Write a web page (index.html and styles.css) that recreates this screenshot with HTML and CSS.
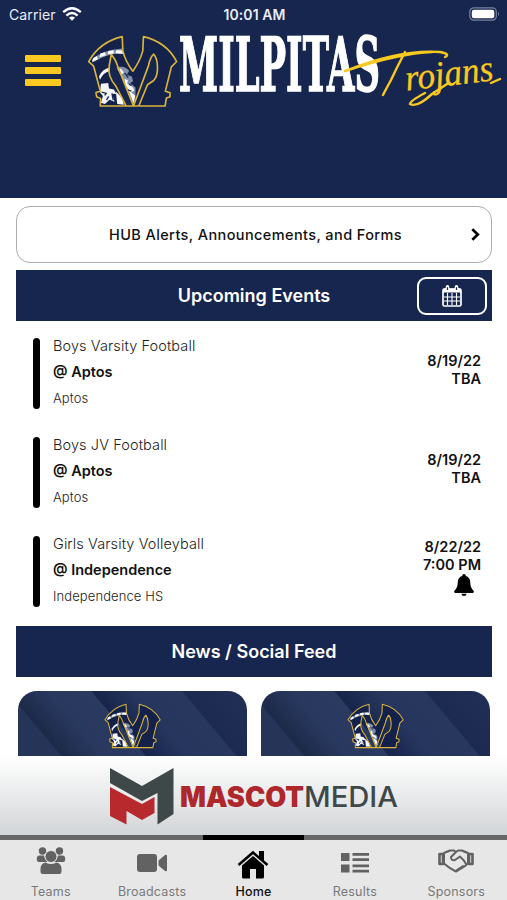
FILE: index.html
```html
<!DOCTYPE html>
<html lang="en">
<head>
<meta charset="utf-8">
<title>Milpitas Trojans</title>
<link rel="stylesheet" href="styles.css">
</head>
<body>
<svg class="defs" width="0" height="0" aria-hidden="true">
  <symbol id="crest" viewBox="262 104 274 218">
    <path id="m" d="M368 108Q300 124 267 183L282 197 302 272 289 276 291 289 303 294 302 317H380L349 257Q323 228 329 195L335 162Q347 174 354 196L402 309 447 196Q452 171 463 161Q473 173 474 195Q476 227 463 240L444 253 418 317H497L501 293 512 289 512 277 498 272 516 199 532 183Q501 124 432 108L430 151Q422 181 400 212Q377 182 370 151Z" fill="#14224b"/>
    <path d="M278 176Q307 149 369 144L374 158Q321 158 279 186Z" fill="#8994ad"/>
    <path d="M277 184L281 172 291 166 295 176ZM300 170L302 159 316 155 319 164ZM325 161L326 151 342 149 342 159ZM348 158L350 149 367 150 371 160Z" fill="#fff"/>
    <path d="M298 228Q309 204 332 201L329 212Q311 215 301 238ZM304 250L326 248 328 264 343 267 351 281 337 280 345 304 330 298 316 311 304 307 310 287 301 276Z" fill="#f2f4f8"/>
    <path d="M351 201Q374 193 389 211L382 223 397 228 401 242 392 248 408 261 408 301 402 312 363 224Z" fill="#8290ac"/>
    <path d="M375 235L385 239 383 249 399 260 405 270 395 276 407 286 402 308 386 265 378 255ZM354 206L364 205 373 216 366 222ZM349 274L367 291 373 313 353 311Z" fill="#fff"/>
    <path d="M306 275L320 279 315 285M337 279L341 299M375 217L386 231M388 251L396 255M385 268L396 272M321 299L327 288" fill="none" stroke="#1b2c55" stroke-width="4"/>
    <path d="M368 108Q300 124 267 183L282 197 302 272 289 276 291 289 303 294 302 317H380L349 257Q323 228 329 195L335 162Q347 174 354 196L402 317 447 196Q452 171 463 161Q473 173 474 195Q476 227 463 240L444 253 418 317H497L501 293 512 289 512 277 498 272 516 199 532 183Q501 124 432 108L430 151Q422 181 400 212Q377 182 370 151ZM380 317H418" fill="none" stroke="#d9b33c" stroke-width="5" stroke-linejoin="round"/>
  </symbol>
</svg>

<header class="header">
  <div class="status">
    <span class="carrier">Carrier
      <svg width="20" height="14" viewBox="0 0 20 14" fill="none" stroke="#fff" stroke-width="2.4"><path d="M1.2 5.2Q10-2.6 18.8 5.2M4.4 8.6Q10 3.6 15.6 8.6"/><path d="M7 10.7Q10 8.2 13 10.7L10 13.7Z" fill="#fff" stroke="none"/></svg>
    </span>
    <span class="clock">10:01 AM</span>
    <svg class="battery" width="31" height="15" viewBox="0 0 31 15"><rect x=".8" y=".8" width="26.5" height="12.4" rx="4" fill="none" stroke="#7783a0" stroke-width="1.2"/><rect x="2.8" y="2.8" width="22.5" height="8.5" rx="2.2" fill="#fff"/><path d="M29 5Q31 7 29 9Z" fill="#7783a0"/></svg>
  </div>
  <div class="brand">
    <div class="menu"><i></i><i></i><i></i></div>
    <svg class="crest" width="91" height="73"><use href="#crest"/></svg>
    <svg class="wordmark" width="326" height="80" viewBox="178 32 326 80">
      <text class="school" x="179" y="91" textLength="201" lengthAdjust="spacingAndGlyphs">MILPITAS</text>
      <text class="team" x="389" y="93" textLength="106" lengthAdjust="spacingAndGlyphs" transform="rotate(-7 389 93)"><tspan fill="none" stroke="none">T</tspan>rojans</text>
      <path d="M345 71Q400 49 440 52Q451 54 445 57M345 71Q400 53 432 52M405 52Q397 67 391 80Q385 91 383 95M425 93Q410 101 410 104Q417 108 432 94L447 84M491 83L500 79" fill="none" stroke="#fac91f" stroke-width="2.4" stroke-linecap="round"/>
    </svg>
  </div>
</header>

<main>
  <a class="hub"><span>HUB Alerts, Announcements, and Forms</span>
    <svg width="9" height="13" viewBox="0 0 9 13" fill="none" stroke="#000" stroke-width="2.7"><path d="M1.3 1.3L6.8 6.5 1.3 11.7"/></svg>
  </a>
  <div class="bar"><h2>Upcoming Events</h2>
    <span class="calendar"><svg width="20" height="22" viewBox="0 0 20 22" fill="none" stroke="#fff"><rect x="1" y="4" width="18" height="17" rx="1.5" stroke-width="1.7"/><path d="M1 5.5H19" stroke-width="4"/><path d="M5.5 8V20M10 8V20M14.5 8V20M2 12H18M2 16H18" stroke-width="1.1"/><path d="M5.5 1.8V5.5M14.5 1.8V5.5" stroke-width="3.6" stroke-linecap="round"/><path d="M5.5 2.2V5M14.5 2.2V5" stroke="#17264f" stroke-width="1.2"/></svg></span>
  </div>
  <section class="events">
    <article class="event"><div class="info"><span class="sport">Boys Varsity Football</span><b>@ Aptos</b><small>Aptos</small></div><div class="when">8/19/22<br>TBA</div></article>
    <article class="event"><div class="info"><span class="sport">Boys JV Football</span><b>@ Aptos</b><small>Aptos</small></div><div class="when">8/19/22<br>TBA</div></article>
    <article class="event"><div class="info"><span class="sport">Girls Varsity Volleyball</span><b>@ Independence</b><small>Independence HS</small></div><div class="when reminder">8/22/22<br>7:00 PM
      <svg width="20" height="22" viewBox="0 0 20 22"><path d="M10 0Q12 0 11.8 2Q16 3.3 16.2 8Q16.3 14 19.6 16.7Q20.2 18.7 18.5 19H1.5Q-.2 18.7.4 16.7Q3.7 14 3.8 8Q4 3.3 8.2 2Q8 0 10 0ZM7.3 19.7H12.7Q12.2 22 10 22Q7.8 22 7.3 19.7Z"/></svg></div></article>
  </section>
  <div class="bar"><h2>News / Social Feed</h2></div>
  <section class="news">
    <div class="card"><svg width="57" height="46"><use href="#crest"/></svg></div>
    <div class="card"><svg width="57" height="46"><use href="#crest"/></svg></div>
  </section>
</main>

<aside class="sponsor">
  <svg width="290" height="60" viewBox="109 767 290 60">
    <path d="M110 768L142 786 173.500 768V814L157.500 824.500V793L142 801 110 783Z" fill="#3e4848"/>
    <path d="M110 787L142 804 154.500 797V813L142 820 126.500 811V824.500L110 816Z" fill="#b7292c"/>
    <text class="mascot" x="180" y="807" textLength="124" lengthAdjust="spacingAndGlyphs">MASCOT</text>
    <text class="media" x="304" y="807" textLength="94" lengthAdjust="spacingAndGlyphs">MEDIA</text>
  </svg>
</aside>

<nav class="tabs">
  <a><svg width="30" height="28" viewBox="0 0 30 28" fill="#626262"><circle cx="6.500" cy="4" r="3.700"/><circle cx="23.500" cy="4" r="3.700"/><path d="M3 8.500H8Q9 13 12 15H3Q.8 15 .8 12.500V11Q1 8.500 3 8.500ZM27 8.500H22Q21 13 18 15H27Q29.200 15 29.200 12.500V11Q29 8.500 27 8.500Z"/><circle cx="15" cy="9.500" r="6" stroke="#e7e7e7"/><path d="M9.500 15.500Q15 18.500 20.500 15.500Q25.500 16.500 25.500 22V24.500Q25.500 27 23 27H7Q4.500 27 4.500 24.500V22Q4.500 16.500 9.500 15.500Z"/></svg><span>Teams</span></a>
  <a><svg width="32" height="28" viewBox="0 0 32 28" fill="#626262"><rect x="1" y="7" width="20" height="18" rx="3"/><path d="M22.500 13.500L29 8Q31 7 31 9V23Q31 25 29 24L22.500 18.500Z"/></svg><span>Broadcasts</span></a>
  <a class="active"><svg width="32" height="30" viewBox="0 0 32 30"><path d="M16 7L27 16.500V28Q27 29.500 25.500 29.500H19V20H13V29.500H6.500Q5 29.500 5 28V16.500Z"/><path d="M1.500 16L16 3.500 30.500 16" fill="none" stroke="#000" stroke-width="2.500"/><path d="M22 2H27V12L22 8Z"/></svg><span>Home</span></a>
  <a><svg width="28" height="28" viewBox="0 0 28 28" fill="#626262"><path d="M0 6H8.500V14H0ZM0 17.500H8.500V25.500H0ZM11.500 6H28V8.700H11.500ZM11.500 11.300H28V14H11.500ZM11.500 17.500H28V20.200H11.500ZM11.500 22.800H28V25.500H11.500Z"/></svg><span>Results</span></a>
  <a><svg width="36" height="28" viewBox="0 0 36 28" fill="none" stroke="#626262" stroke-width="2" stroke-linejoin="round" stroke-linecap="round"><path d="M6 6Q11 4 12 3.500H16L18 5 20 3.500H24Q27 5 30 6V16.500Q28 19 18 24.500Q11 21 6 16.500ZM18 5L13 10Q13 14 17 13L22 9.500Q26 13 28 17M19 23L25 19"/><path d="M1.500 7H5V17H1.500ZM31 7H34.500V17H31Z" stroke-width="2.600"/></svg><span>Sponsors</span></a>
</nav>
</body>
</html>
```
FILE: styles.css
```css
* { box-sizing: border-box; }
body { margin: 0; width: 507px; height: 900px; overflow: hidden; background: #fff; color: #111; font-family: Inter, "Liberation Sans", sans-serif; display: flex; flex-direction: column; }
.defs { position: absolute; }
svg { display: block; flex: none; }
.header { height: 198px; flex: none; background: #17264f; color: #e9edf5; }
.status { height: 28px; padding: 0 7px 0 9px; display: grid; grid-template-columns: 1fr auto 1fr; align-items: center; font-size: 14px; }
.carrier { display: flex; align-items: center; gap: 6px; letter-spacing: .1px; }
.clock { font-weight: 600; letter-spacing: .1px; }
.battery { justify-self: end; }
.brand { display: flex; padding-left: 25px; }
.menu { width: 36px; padding-top: 27px; display: flex; flex-direction: column; gap: 5px; }
.menu i { height: 7px; border-radius: 1px; background: #fac91f; }
.crest { margin: 7px 0 0 26px; }
.wordmark { margin-top: 4px; }
.school { font: bold 74px "DejaVu Serif", serif; fill: #fff; stroke: #fff; stroke-width: 1.500px; }
.team { font: italic 37px "Liberation Serif", serif; fill: #fac91f; stroke: #fac91f; stroke-width: .3px; }

main { flex: none; height: 558px; padding: 8px 15px 0 16px; overflow: hidden; }
.hub { height: 57px; display: flex; align-items: center; padding: 0 11px 0 23px; border: 1.500px solid #adadad; border-radius: 14px; font-size: 14.500px; font-weight: 500; letter-spacing: .4px; }
.hub span { flex: 1; text-align: center; }
.bar { height: 51px; margin-top: 7px; background: #17264f; color: #fff; display: grid; align-items: center; justify-items: center; }
.bar > * { grid-area: 1 / 1; }
h2 { margin: 0; font-size: 18px; font-weight: 600; }
.calendar { width: 70px; height: 38px; margin-right: 5px; justify-self: end; border: 2px solid #fff; border-radius: 9px; display: grid; place-items: center; }
.events { height: 298px; padding: 17px 11px 0 17px; display: flex; flex-direction: column; gap: 29px; }
.event { height: 70px; flex: none; display: flex; align-items: center; justify-content: space-between; }
.event::before { content: ""; width: 7px; height: 71px; border-radius: 4px; background: #000; }
.info { flex: 1; height: 70px; padding-left: 13px; display: flex; flex-direction: column; }
.sport { font-size: 14.500px; line-height: 15px; font-weight: 300; color: #222; letter-spacing: .1px; }
.info b { margin-top: 10px; font-size: 14.500px; line-height: 18px; font-weight: 600; }
.info small { margin-top: 9px; font-size: 13px; line-height: 16px; font-weight: 300; color: #222; letter-spacing: .1px; }
.when { text-align: right; font-size: 14.500px; line-height: 18px; font-weight: 600; margin-top: -6px; }
.reminder { margin-top: -8px; }
.reminder svg { margin: 0 7px 0 auto; }
.events + .bar { margin-top: 7px; }
.news { padding: 14px 2px 0; display: grid; grid-template-columns: 1fr 1fr; gap: 14px; }
.card { height: 100px; padding-top: 12px; border-radius: 19px; display: flex; align-items: flex-start; justify-content: center; background: linear-gradient(50deg, #263457 0 23%, #1c2948 23.500%, #28385e 36%, #2a3a60 50%, #17254a 50.500%, #26365e 64%, #28375d 79%, #1c2a52 79.500%, #222f57 100%); }

.sponsor { height: 79px; flex: none; padding: 11px 0 0 109px; background: linear-gradient(#fff, #d2d5d7); }
.mascot { font: 900 28px Inter, sans-serif; fill: #ad272b; }
.media { font: 500 28px Inter, sans-serif; fill: #3e4848; }
.tabs { height: 65px; flex: none; padding-top: 5px; display: grid; grid-template-columns: repeat(5, 1fr); background: linear-gradient(90deg, #666 203px, #000 203px 304px, #666 304px) top / 100% 5px no-repeat #e7e7e7; }
.tabs a { display: flex; flex-direction: column; align-items: center; justify-content: space-between; padding: 7px 0 0; height: 60px; font-size: 12.500px; line-height: 14px; color: #797979; letter-spacing: .2px; }
.tabs span { margin-bottom: 1px; }
.tabs .active { color: #111; font-weight: 500; padding-top: 9px; }
.tabs .active svg { margin-bottom: -5px; }
```
